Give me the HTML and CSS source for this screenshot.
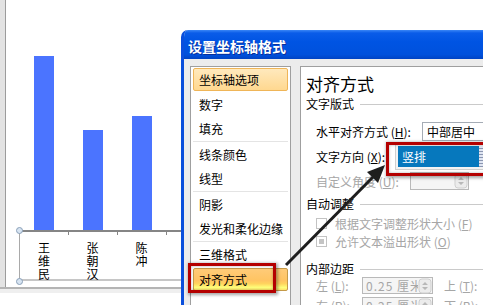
FILE: index.html
```html
<!DOCTYPE html>
<html lang="zh-CN">
<head>
  <meta charset="UTF-8">
  <title>设置坐标轴格式</title>
  <link rel="stylesheet" href="styles.css">
</head>
<body>
  <div class="screen">
    <div class="sheet">
      <div class="gutter"></div>
      <div class="chart">
        <div class="bars">
          <div class="cat"><div class="bar" style="height:174px"></div></div>
          <div class="cat"><div class="bar" style="height:100px"></div></div>
          <div class="cat"><div class="bar" style="height:114px"></div></div>
        </div>
        <div class="axis">
          <span class="handle handle-top"></span>
          <span class="handle handle-bottom"></span>
          <div class="cat"><div class="label">王维民</div></div>
          <div class="cat"><div class="label">张朝汉</div></div>
          <div class="cat"><div class="label">陈冲</div></div>
          <div class="cat"></div>
        </div>
      </div>
    </div>
    <div class="sheet-foot"></div>

    <div class="dialog">
      <div class="title">设置坐标轴格式</div>
      <div class="dlg-body">
        <div class="nav">
          <div class="nav-item current">坐标轴选项</div>
          <div class="nav-item">数字</div>
          <div class="nav-item sep">填充</div>
          <div class="nav-item">线条颜色</div>
          <div class="nav-item sep">线型</div>
          <div class="nav-item">阴影</div>
          <div class="nav-item sep">发光和柔化边缘</div>
          <div class="nav-item">三维格式</div>
          <div class="nav-item hot">对齐方式</div>
        </div>

        <div class="pane">
          <h2>对齐方式</h2>
          <div class="group first">文字版式</div>

          <div class="field row-h">
            <span class="lbl w-106">水平对齐方式 (<u>H</u>):</span>
            <div class="combo">中部居中</div>
          </div>
          <div class="field row-x">
            <span class="lbl w-79">文字方向 (<u>X</u>):</span>
            <div class="combo-dir">
              <div class="sel">竖排</div>
              <div class="drop"></div>
            </div>
          </div>
          <div class="field row-u disabled">
            <span class="lbl w-94">自定义角度 (<u>U</u>):</span>
            <div class="spin angle">
              <div class="spin-val"></div>
              <svg class="spin-btn" viewBox="0 0 14 16"><rect x="1" y="1" width="12" height="14" rx="3" fill="#ececec" stroke="#cfcfcf"/><path d="M4 7 L7 4 L10 7Z M4 9 L7 12 L10 9Z" fill="#b8b8b8"/></svg>
            </div>
          </div>

          <div class="group autofit">自动调整</div>
          <div class="check first-check">
            <span class="box"></span>
            <span>根据文字调整形状大小 (<u>F</u>)</span>
          </div>
          <div class="check">
            <span class="box mixed"></span>
            <span>允许文本溢出形状 (<u>O</u>)</span>
          </div>

          <div class="group inset">内部边距</div>
          <div class="pad-row">
            <span class="lbl w-46">左 (<u>L</u>):</span>
            <div class="spin wide">
              <div class="spin-val">0.25 厘米</div>
              <svg class="spin-btn" viewBox="0 0 14 16"><rect x="1" y="1" width="12" height="14" rx="3" fill="#ececec" stroke="#cfcfcf"/><path d="M4 7 L7 4 L10 7Z M4 9 L7 12 L10 9Z" fill="#b8b8b8"/></svg>
            </div>
            <span class="lbl side">上 (<u>T</u>):</span>
          </div>
          <div class="pad-row second">
            <span class="lbl w-46">右 (<u>R</u>):</span>
            <div class="spin wide">
              <div class="spin-val">0.25 厘米</div>
              <svg class="spin-btn" viewBox="0 0 14 16"><rect x="1" y="1" width="12" height="14" rx="3" fill="#ececec" stroke="#cfcfcf"/><path d="M4 7 L7 4 L10 7Z M4 9 L7 12 L10 9Z" fill="#b8b8b8"/></svg>
            </div>
            <span class="lbl side">下 (<u>B</u>):</span>
          </div>
        </div>
      </div>
    </div>

    <div class="mark mark-nav"></div>
    <div class="mark mark-combo"></div>
    <svg class="arrow" viewBox="0 0 483 305">
      <line x1="286" y1="265" x2="376" y2="174" stroke="#1e1e1e" stroke-width="3"/>
      <polygon points="385,165 378,183 367,172" fill="#1e1e1e"/>
    </svg>
  </div>
</body>
</html>
```

FILE: styles.css
```css
* {
  margin: 0;
  padding: 0;
  box-sizing: border-box;
}
html, body {
  height: 100%;
  overflow: hidden;
}
body {
  background: #fff;
  font-family: "Noto Sans CJK SC", "Noto Sans", sans-serif;
  font-size: 12px;
  color: #000;
}
u { text-decoration: underline; }

.screen {
  position: relative;
  width: 483px;
  height: 305px;
  overflow: hidden;
}

/* chart behind the dialog */
.sheet {
  display: flex;
  height: 289px;
  border-bottom: 2px solid #b4b4b4;
}
.sheet-foot {
  height: 4px;
  background: #efefef;
}
.gutter {
  width: 6px;
  background: #e3e3e3;
  border-right: 1px solid #9c9c9c;
}
.chart {
  flex: 1;
  padding-left: 13px;
}
.bars {
  display: flex;
  align-items: flex-end;
  height: 230px;
}
.cat {
  flex: none;
  width: 49px;
}
.bar {
  width: 20px;
  margin-left: 15px;
  background: #4b74ff;
}
.axis {
  position: relative;
  display: flex;
  height: 51px;
  border-top: 2px solid #858585;
  border-left: 1px solid #a9a9a9;
  border-bottom: 2px solid #c6c6c6;
  background: repeating-linear-gradient(90deg, transparent 0 48px, #858585 48px 49px) top left / 100% 3px no-repeat;
}
.axis .cat:first-of-type { width: 48px; }
.label {
  width: 12px;
  margin: 9px auto 0;
  font-size: 12px;
  line-height: 13px;
}
.handle {
  position: absolute;
  left: -4px;
  width: 7px;
  height: 7px;
  border-radius: 50%;
  background: #d7e4f2;
  border: 1px solid #8aa0b8;
}
.handle-top { top: -5px; }
.handle-bottom { bottom: -6px; }

/* dialog */
.dialog {
  position: absolute;
  left: 181px;
  top: 30px;
  width: 310px;
  height: 280px;
  display: flex;
  flex-direction: column;
  background: #ececec;
  border-left: 3px solid #0a4fdc;
  border-top-left-radius: 7px;
  overflow: hidden;
}
.title {
  height: 29px;
  padding-left: 4px;
  line-height: 32px;
  font-size: 14px;
  font-weight: bold;
  color: #fff;
  text-shadow: 1px 1px 0 #0a2f9a;
  background: linear-gradient(#3a86f6 0, #0a5ce8 3px, #0054e3 40%, #0051dc 85%, #0043c4 100%);
}
.dlg-body {
  flex: 1;
  display: flex;
  gap: 9px;
  padding: 7px 0 0 6px;
}

.nav {
  flex: none;
  width: 101px;
  background: #fff;
  border: 1px solid #9f9f9f;
  padding: 0 2px;
}
.nav-item {
  height: 25px;
  line-height: 25px;
  padding-left: 6px;
  white-space: nowrap;
}
.nav-item.sep {
  border-bottom: 1px solid #e4e4e4;
  line-height: 24px;
}
.nav-item.current,
.nav-item.hot {
  height: 23px;
  margin: 1px 0;
  line-height: 21px;
  padding-left: 5px;
  border-radius: 2px;
}
.nav-item.current {
  border: 1px solid #efb558;
  background: linear-gradient(#ffe9bd, #ffd890);
}
.nav-item.hot {
  border: 1px solid #c59a48;
  background: linear-gradient(#ffcb78 0, #ffc462 55%, #ffd45e 70%, #ffff7a 88%, #ffe46a 100%);
}

.pane {
  flex: none;
  width: 200px;
  background: #fff;
  border: 1px solid #9f9f9f;
  border-right: none;
  padding-left: 5px;
  overflow: hidden;
}
.pane h2 {
  margin-top: 6px;
  font-size: 17px;
  font-weight: normal;
  line-height: 22px;
}
.group {
  display: flex;
  align-items: center;
  gap: 6px;
  height: 16px;
  line-height: 16px;
}
.group::after {
  content: "";
  flex: 1;
  border-top: 1px solid #cacaca;
}
.group.first { margin-top: 1px; }
.group.autofit { margin-top: 6px; }
.group.inset { margin-top: 11px; }

.field {
  display: flex;
  align-items: center;
  height: 20px;
  padding-left: 10px;
}
.row-h { margin-top: 9px; }
.row-x { margin-top: 5px; height: 21px; }
.row-u { margin-top: 5px; height: 18px; }
.disabled { color: #a6a6a6; }
.lbl { flex: none; white-space: nowrap; }
.w-106 { width: 106px; }
.w-94 { width: 94px; }
.w-79 { width: 79px; }
.w-46 { width: 46px; }

.combo {
  flex: none;
  width: 90px;
  height: 19px;
  padding-left: 4px;
  line-height: 17px;
  border: 1px solid #a5acb5;
  background: #fff;
}
.combo-dir {
  flex: none;
  display: flex;
  width: 100px;
  height: 27px;
  margin: -3px 0;
  padding: 2px;
  border: 1px solid #cfcfcf;
  background: #f3f3f3;
}
.sel {
  flex: none;
  width: 81px;
  padding-left: 4px;
  line-height: 21px;
  color: #fff;
  background: #0678bd;
}
.drop {
  flex: none;
  width: 4px;
  background: repeating-linear-gradient(#dfe5f2 0 2px, #8b96b0 2px 3px);
}

.spin {
  flex: none;
  display: flex;
  align-items: center;
  height: 18px;
  border: 1px solid #b9b9b9;
  background: #f5f5f5;
  color: #a6a6a6;
}
.spin.angle { width: 59px; }
.spin.wide { width: 71px; height: 17px; }
.spin-val {
  flex: 1;
  overflow: hidden;
  white-space: nowrap;
  padding-left: 3px;
  line-height: 15px;
  letter-spacing: 1px;
}
.spin-btn {
  flex: none;
  width: 14px;
  height: 16px;
}

.check {
  display: flex;
  align-items: center;
  gap: 8px;
  height: 18px;
  padding-left: 10px;
  color: #a6a6a6;
  white-space: nowrap;
}
.check.first-check { margin-top: 2px; }
.box {
  flex: none;
  width: 11px;
  height: 11px;
  border: 1px solid #c3c3c3;
  background: #fff;
}
.box.mixed {
  background: #c4c4c4;
  box-shadow: inset 0 0 0 2px #fff;
}

.pad-row {
  display: flex;
  align-items: center;
  height: 17px;
  padding-left: 10px;
  color: #a6a6a6;
}
.pad-row.second { margin-top: 3px; }
.lbl.side { margin-left: 11px; }

/* annotations drawn over the screenshot */
.mark {
  position: absolute;
  border: 3px solid #b40000;
  box-shadow: 1px 1px 3px 1px rgba(0, 0, 0, 0.35), inset 0 0 3px rgba(0, 0, 0, 0.3);
}
.mark-nav {
  left: 188px;
  top: 263px;
  width: 88px;
  height: 30px;
}
.mark-combo {
  left: 386px;
  top: 142px;
  width: 110px;
  height: 34px;
}
.arrow {
  position: absolute;
  left: 0;
  top: 0;
  width: 483px;
  height: 305px;
  pointer-events: none;
}
```
